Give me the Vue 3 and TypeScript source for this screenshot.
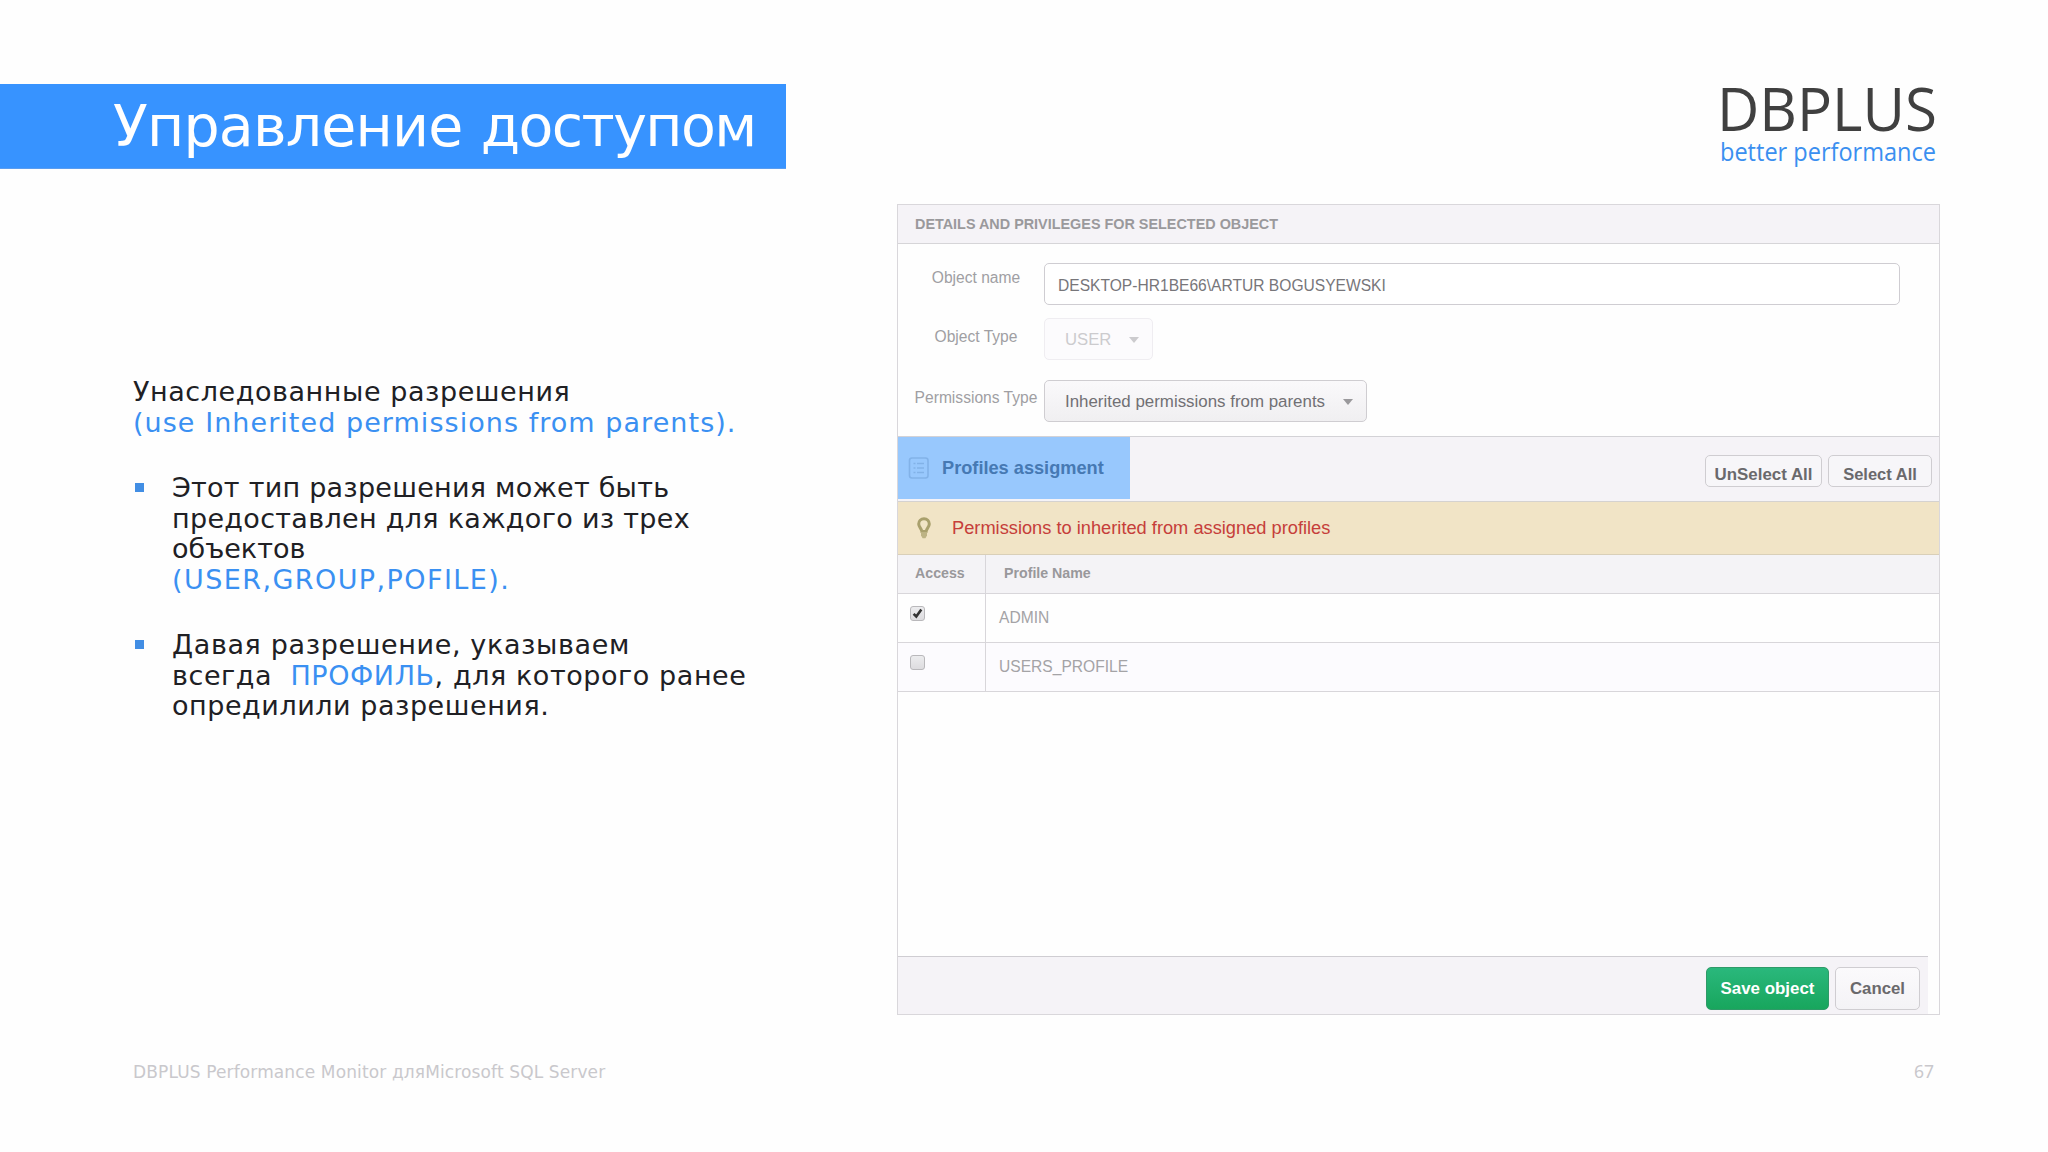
<script setup lang="ts">
import { reactive } from 'vue'

interface Profile {
  name: string
  access: boolean
}

const profiles = reactive<Profile[]>([
  { name: 'ADMIN', access: true },
  { name: 'USERS_PROFILE', access: false },
])
</script>

<template>
  <main class="slide">
    <header class="top">
      <h1 class="title"><span class="w1">Управление</span> <span class="w2">доступом</span></h1>
      <svg class="logo" width="240" height="120" viewBox="0 0 240 120" role="img" aria-label="DBPLUS better performance">
        <text class="logo-name" x="7" y="67" textLength="220" lengthAdjust="spacingAndGlyphs">DBPLUS</text>
        <text class="logo-tag" x="10" y="97" textLength="216" lengthAdjust="spacingAndGlyphs">better performance</text>
      </svg>
    </header>

    <div class="body">
      <section class="notes">
        <p class="intro">
          <span class="l1">Унаследованные разрешения</span><br />
          <span class="accent l2">(use Inherited permissions from parents).</span>
        </p>
        <ul>
          <li>
            <span class="l3">Этот тип разрешения может быть</span><br />
            <span class="l4">предоставлен для каждого из трех</span><br />
            <span class="l5">объектов</span><br />
            <span class="accent l6">(USER,GROUP,POFILE).</span>
          </li>
          <li>
            <span class="l7">Давая разрешение, указываем</span><br />
            <span class="l8">всегда&nbsp; <span class="accent">ПРОФИЛЬ</span>, для которого ранее</span><br />
            <span class="l9">опредилили разрешения.</span>
          </li>
        </ul>
      </section>

      <section class="panel">
        <h2 class="panel-head">DETAILS AND PRIVILEGES FOR SELECTED OBJECT</h2>

        <div class="form">
          <div class="row row-name">
            <label>Object name</label>
            <div class="input">DESKTOP-HR1BE66\ARTUR BOGUSYEWSKI</div>
          </div>
          <div class="row row-type">
            <label>Object Type</label>
            <div class="select disabled">USER<i class="caret"></i></div>
          </div>
          <div class="row">
            <label>Permissions Type</label>
            <div class="select">Inherited permissions from parents<i class="caret"></i></div>
          </div>
        </div>

        <div class="toolbar">
          <div class="tab">
            <svg width="22" height="22" viewBox="0 0 22 22" fill="none" stroke="#82b2e8" stroke-width="1.6">
              <rect x="1.5" y="1" width="18.5" height="20" rx="2.5" />
              <path d="M5.5 6.5h2M9 6.5h7M5.5 11h2M9 11h7M5.5 15.5h2M9 15.5h7" stroke-width="1.3" />
            </svg>
            <span>Profiles assigment</span>
          </div>
          <div class="tools">
            <button class="small unselect">UnSelect All</button>
            <button class="small selectall">Select All</button>
          </div>
        </div>

        <div class="hint">
          <svg width="14" height="22" viewBox="0 0 14 22">
            <path
              d="M7 1.8C3.9 1.8 1.7 4 1.7 6.9c0 3 2.7 4.4 3.2 7.5h4.2C9.6 11.3 12.3 9.9 12.3 6.9 12.3 4 10.1 1.8 7 1.8Z"
              fill="none" stroke="#a9a06d" stroke-width="3" />
            <path d="M4 15h6v3.5l-1.6 2.7H5.6L4 18.5Z" fill="#bdb384" />
          </svg>
          <span>Permissions to inherited from assigned profiles</span>
        </div>

        <div class="table">
          <div class="tr th">
            <div class="c1">Access</div>
            <div class="c2">Profile Name</div>
          </div>
          <div v-for="p in profiles" :key="p.name" class="tr td">
            <div class="c1">
              <span class="check" @click="p.access = !p.access">
                <svg v-if="p.access" width="11" height="11" viewBox="0 0 11 11">
                  <path d="M1.6 5.8l2.7 2.7L9.3 1.6" fill="none" stroke="#333" stroke-width="2.6" />
                </svg>
              </span>
            </div>
            <div class="c2">{{ p.name }}</div>
          </div>
        </div>

        <div class="panel-foot">
          <button class="save">Save object</button>
          <button class="cancel">Cancel</button>
        </div>
      </section>
    </div>

    <footer class="foot">
      <span class="foot-name">DBPLUS Performance Monitor дляMicrosoft SQL Server</span>
      <span class="page">67</span>
    </footer>
  </main>
</template>

<style>
body {
  background: #fefefe;
  overflow: hidden;
}
</style>

<style scoped>
* {
  box-sizing: border-box;
}
.slide {
  width: 2048px;
  height: 1152px;
  display: flex;
  flex-direction: column;
  background: #fefefe;
  font-family: 'DejaVu Sans', sans-serif;
  color: #202024;
}
.top {
  height: 204px;
  padding-top: 84px;
  display: flex;
  justify-content: space-between;
  align-items: flex-start;
  flex: none;
}
.title {
  margin: 0;
  width: 786px;
  height: 85px;
  line-height: 85px;
  background: #3793ff;
  border-bottom: 1px solid #5a9df0;
  color: #fff;
  font-weight: 400;
  font-size: 57px;
  padding-left: 113px;
  white-space: nowrap;
}
.w1 {
  letter-spacing: -0.8px;
}
.w2 {
  letter-spacing: -1.6px;
}
.logo {
  margin: -20px 98px 0 0;
}
.logo-name {
  font-family: 'Open Sans', sans-serif;
  font-size: 61px;
  font-weight: 400;
  fill: #404040;
}
.logo-tag {
  font-family: 'Open Sans', sans-serif;
  font-size: 25px;
  fill: #3a8ff0;
}
.body {
  display: flex;
  height: 810px;
  flex: none;
}
.notes {
  width: 897px;
  flex: none;
  padding: 173px 0 0 133px;
  font-size: 27px;
  line-height: 30.7px;
  white-space: nowrap;
}
.l1 {
  letter-spacing: 0.56px;
}
.l2 {
  letter-spacing: 1.05px;
}
.l3 {
  letter-spacing: 0.25px;
}
.l4 {
  letter-spacing: 0.31px;
}
.l6 {
  letter-spacing: 1.43px;
}
.l7 {
  letter-spacing: 0.63px;
}
.l8 {
  letter-spacing: 0.57px;
}
.l9 {
  letter-spacing: 0.54px;
}
.intro {
  margin: 0 0 34.6px;
}
ul {
  margin: 0;
  padding: 0;
  list-style: none;
}
li {
  display: block;
  padding-left: 39px;
  margin-bottom: 34px;
  background: linear-gradient(#428ee4, #428ee4) no-repeat 2px 10px / 9px 9px;
}
.accent {
  color: #3a90f2;
}
.panel {
  width: 1043px;
  height: 811px;
  flex: none;
  display: flex;
  flex-direction: column;
  border: 1px solid #d9d7db;
  font-family: 'Liberation Sans', Arial, sans-serif;
}
.panel-head {
  margin: 0;
  height: 39px;
  line-height: 38px;
  padding-left: 17px;
  border-bottom: 1px solid #d6d5d8;
  background: #f5f3f7;
  color: #9a999c;
  font-size: 14.4px;
  font-weight: 700;
}
.form {
  height: 193px;
  padding: 19px 39px 0 11px;
  border-bottom: 1px solid #d3d2d6;
}
.row {
  display: flex;
  align-items: flex-start;
}
.row-name {
  height: 55px;
}
.row-type {
  height: 62px;
}
label {
  width: 135px;
  padding-right: 1px;
  text-align: center;
  line-height: 36px;
  font-size: 15.6px;
  color: #a09fa3;
  white-space: nowrap;
}
.row-name label {
  line-height: 30px;
}
.row-type label {
  line-height: 37px;
}
.input {
  flex: 1;
  height: 42px;
  line-height: 43px;
  border: 1px solid #cfcdd2;
  border-radius: 5px;
  padding-left: 13px;
  background: #fff;
  font-size: 15.6px;
  color: #77767a;
}
.select {
  height: 42px;
  line-height: 41px;
  padding: 0 13px 0 20px;
  display: flex;
  align-items: center;
  gap: 17.5px;
  border: 1px solid #cfcdd1;
  border-radius: 5px;
  background: linear-gradient(#faf9fb, #f0eff1);
  font-size: 16.9px;
  color: #717074;
}
.select.disabled {
  border-color: #efedf1;
  background: #fcfbfd;
  font-size: 16.7px;
  color: #cccbce;
}
.caret {
  width: 0;
  height: 0;
  margin-top: 2px;
  border: 5px solid transparent;
  border-top: 6px solid #9a999c;
  border-bottom: 0;
}
.disabled .caret {
  border-top-color: #cccbce;
}
.toolbar {
  height: 65px;
  display: flex;
  justify-content: space-between;
  align-items: flex-start;
  background: #f5f3f7;
  border-bottom: 1px solid #d5d2d0;
}
.tab {
  width: 232px;
  height: 62px;
  padding: 0 0 0 10px;
  display: flex;
  align-items: center;
  gap: 12px;
  background: #98c8fd;
  color: #4679b3;
  font-size: 18.2px;
  font-weight: 700;
}
.tab span {
  line-height: 62px;
}
.tools {
  display: flex;
  gap: 6px;
  padding: 18px 7px 0 0;
}
button {
  margin: 0;
  padding: 0;
  font-family: inherit;
  font-weight: 700;
  border-radius: 5px;
  border: 1px solid #cfcdd1;
  color: #6a696c;
}
.small {
  height: 32px;
  padding-top: 6px;
  background: #f7f6f9;
}
.unselect {
  width: 117px;
  padding-top: 7px;
  font-size: 16.9px;
}
.selectall {
  width: 104px;
  font-size: 16.5px;
}
.hint {
  height: 53px;
  display: flex;
  align-items: center;
  padding-left: 19px;
  gap: 21px;
  background: #f1e4c6;
  border-bottom: 1px solid #d9cfb8;
  color: #c63e3a;
  font-size: 18.25px;
}
.hint span {
  padding-bottom: 1px;
}
.tr {
  display: flex;
  border-bottom: 1px solid #d8d6da;
}
.c1 {
  width: 88px;
  border-right: 1px solid #d8d6da;
}
.th {
  height: 39px;
  line-height: 37px;
  background: #f4f3f6;
  color: #99989b;
  font-size: 14.2px;
  font-weight: 700;
}
.th .c1 {
  padding-left: 17px;
}
.th .c2 {
  padding-left: 18px;
}
.td {
  height: 49px;
  line-height: 48px;
  color: #a4a3a6;
  font-size: 15.6px;
}
.td:last-child {
  background: #fcfbfe;
}
.td .c1 {
  padding: 12px 0 0 12px;
  line-height: 0;
}
.td .c2 {
  padding-left: 13px;
}
.check {
  display: flex;
  align-items: center;
  justify-content: center;
  width: 15px;
  height: 15px;
  border: 1px solid #b9b8bb;
  border-radius: 3px;
  background: linear-gradient(#ececee, #dddcdf);
}
.panel-foot {
  margin: auto 11px 0 0;
  height: 58px;
  display: flex;
  justify-content: flex-end;
  gap: 6px;
  padding: 10px 8px 0 0;
  border-top: 1px solid #cfcdd2;
  background: #f5f3f7;
}
.save {
  width: 123px;
  height: 43px;
  font-size: 16.9px;
  color: #fff;
  border-color: #2f9a68;
  background: linear-gradient(#2ab87c, #18a65d);
}
.cancel {
  width: 85px;
  height: 43px;
  font-size: 16.8px;
  background: linear-gradient(#fbfafc, #f4f3f6);
}
.foot {
  flex: 1;
  display: flex;
  justify-content: space-between;
  align-items: flex-start;
  padding: 43px 114px 0 133px;
  font-size: 17px;
  line-height: 30px;
  color: #c9c8cc;
}
.foot-name {
  letter-spacing: 0.13px;
}
.page {
  font-family: 'Noto Sans', sans-serif;
  font-size: 17.5px;
  line-height: 29px;
}
</style>
